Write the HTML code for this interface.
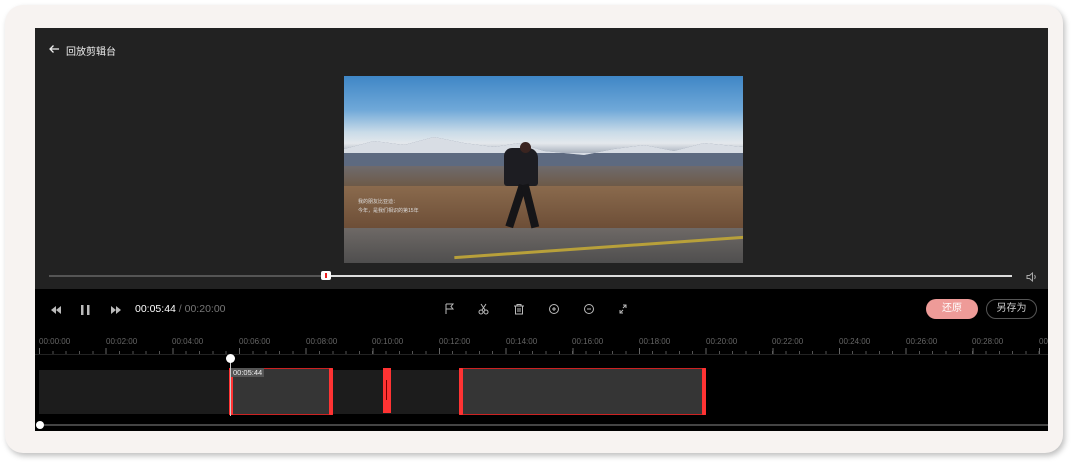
<!DOCTYPE html>
<html><head><meta charset="utf-8"><style>
*{margin:0;padding:0;box-sizing:border-box}
body{width:1080px;height:469px;background:#fff;position:relative;overflow:hidden;font-family:"Liberation Sans","Noto Sans CJK SC",sans-serif}
.card{position:absolute;left:5px;top:5px;width:1058px;height:448px;background:#f7f3f1;border-radius:18px;box-shadow:2px 3px 6px rgba(0,0,0,.25)}
.panel{position:absolute;left:35px;top:28px;width:1013px;height:403px;background:#000;overflow:hidden}
.top{position:absolute;left:0;top:0;width:1013px;height:261px;background:#222}
.abs{position:absolute}
.lbl{position:absolute;top:309px;font-size:8px;color:#666}
</style></head><body>
<div class="card"></div>
<div class="panel">
 <div class="top"></div>
 <svg class="abs" style="left:13px;top:16px" width="12" height="10" fill="none" stroke="#eee" stroke-width="1.3"><path d="M11 5H2M5.5 1.5L2 5l3.5 3.5"/></svg>
 <div class="abs" style="left:31px;top:15px;color:#eee;font-size:10px">回放剪辑台</div>
 <div class="abs" style="left:309px;top:48px;width:399px;height:187px;overflow:hidden;background:linear-gradient(180deg,#3f86c6 0%,#6fa8d8 18%,#c9dbe8 30%,#e4e8ec 36%,#5c6a80 48%,#7d7370 56%,#6b5644 64%,#8a6a4d 72%,#6d6560 82%,#575555 100%)">
  <svg class="abs" style="left:0;top:55px" width="399" height="40"><path d="M0 18L30 10 60 14 90 6 120 12 150 16 175 12 200 20 240 24 270 18 300 14 330 20 360 12 399 16V40H0Z" fill="#5d6a80"/><path d="M0 18L30 10 60 14 90 6 120 12 150 16 175 12 200 20 240 24 270 18 300 14 330 20 360 12 399 16V22H0Z" fill="#d8dde4"/></svg>
  <div class="abs" style="left:0;top:90px;width:399px;height:20px;background:linear-gradient(180deg,#6f6b6d,#6d5a48)"></div>
  <div class="abs" style="left:0;top:110px;width:399px;height:42px;background:linear-gradient(180deg,#8a6a4d,#6d4e37)"></div>
  <div class="abs" style="left:0;top:152px;width:399px;height:35px;background:linear-gradient(180deg,#6e6966,#4f4e4e)"></div>
  <div class="abs" style="left:110px;top:170px;width:290px;height:3px;background:#b8a03a;transform:rotate(-4deg)"></div>
  <div class="abs" style="left:160px;top:72px;width:34px;height:38px;background:#1d1d22;border-radius:8px 10px 3px 3px"></div>
  <div class="abs" style="left:176px;top:66px;width:11px;height:11px;background:#3a2420;border-radius:50%"></div>
  <div class="abs" style="left:168px;top:108px;width:8px;height:44px;background:#151518;transform:rotate(18deg)"></div>
  <div class="abs" style="left:182px;top:108px;width:8px;height:44px;background:#151518;transform:rotate(-14deg)"></div>
  <div class="abs" style="left:14px;top:122px;font-size:5px;color:#ddd;line-height:9px">我的朋友比亚迪：<br>今年，是我们相识的第15年</div>
 </div>
 <div class="abs" style="left:14px;top:247px;width:277px;height:2px;background:#555"></div>
 <div class="abs" style="left:291px;top:247px;width:686px;height:2px;background:#ddd"></div>
 <div class="abs" style="left:286px;top:243px;width:10px;height:9px;background:#fff;border-radius:2px"><div style="margin:2px auto;width:2px;height:5px;background:#e22"></div></div>
 <svg class="abs" style="left:991px;top:244px" width="12" height="10" fill="none" stroke="#aaa" stroke-width="1"><path d="M1 3.5h2.5L6.5 1v8L3.5 6.5H1z M8.5 3q1.5 2 0 4"/></svg>
 <!-- controls -->
 <svg class="abs" style="left:15px;top:277px" width="90" height="10" fill="#bbb">
  <path d="M6 1v8L1 5zM11 1v8L6 5z"/>
  <rect x="31" y="0" width="2.5" height="10"/><rect x="37" y="0" width="2.5" height="10"/>
  <path d="M61 1v8l5-4zM66 1v8l5-4z"/>
 </svg>
 <div class="abs" style="left:100px;top:275px;font-size:10.5px;color:#fff">00:05:44 <span style="color:#777">/ 00:20:00</span></div>
 <svg class="abs" style="left:405px;top:273px" width="200" height="16" fill="none" stroke="#bbb" stroke-width="1">
  <path d="M6 3v10M6 3h7l-2 2.5 2 2.5h-7"/>
  <circle cx="41" cy="11" r="2"/><circle cx="46" cy="11" r="2"/><path d="M42 9l4-6M45 9l-4-6"/>
  <path d="M74 5h10M77 5v-1.5h4V5M75.5 5v8h7V5M78 7v4M80 7v4"/>
  <circle cx="114" cy="8" r="4.5"/><path d="M112 8h4M114 6v4"/>
  <circle cx="149" cy="8" r="4.5"/><path d="M147 8h4"/>
  <path d="M180 12l3-3M183 4h3v3M186 4l-3 3M180 9v3h3"/>
 </svg>
 <div class="abs" style="left:891px;top:271px;width:52px;height:20px;border-radius:10px;background:#ee9b98;color:#fff;font-size:10px;text-align:center;line-height:20px">还原</div>
 <div class="abs" style="left:951px;top:271px;width:51px;height:20px;border-radius:10px;border:1px solid #555;color:#ccc;font-size:10px;text-align:center;line-height:18px">另存为</div>
 <!-- ruler -->
 <div class="lbl" style="left:4px">00:00:00</div><div class="lbl" style="left:71px">00:02:00</div><div class="lbl" style="left:137px">00:04:00</div><div class="lbl" style="left:204px">00:06:00</div><div class="lbl" style="left:271px">00:08:00</div><div class="lbl" style="left:337px">00:10:00</div><div class="lbl" style="left:404px">00:12:00</div><div class="lbl" style="left:471px">00:14:00</div><div class="lbl" style="left:537px">00:16:00</div><div class="lbl" style="left:604px">00:18:00</div><div class="lbl" style="left:671px">00:20:00</div><div class="lbl" style="left:737px">00:22:00</div><div class="lbl" style="left:804px">00:24:00</div><div class="lbl" style="left:871px">00:26:00</div><div class="lbl" style="left:937px">00:28:00</div><div class="lbl" style="left:1004px">00:30:00</div>
 <div class="abs" style="left:4px;top:323px;width:1009px;height:3px;background:repeating-linear-gradient(90deg,#555 0 1px,transparent 1px 13.33px)"></div>
 <div class="abs" style="left:4px;top:320px;width:1009px;height:6px;background:repeating-linear-gradient(90deg,#666 0 1px,transparent 1px 66.67px)"></div>
 <div class="abs" style="left:0;top:326px;width:1013px;height:1px;background:#222"></div>
 <!-- track -->
 <div class="abs" style="left:4px;top:342px;width:420px;height:44px;background:#1c1c1c"></div>
 <div class="abs" style="left:194px;top:340px;width:104px;height:47px;border:1px solid #c22;background:#353535"></div>
 <div class="abs" style="left:194px;top:340px;width:4px;height:47px;background:#f33;border-radius:1px"></div>
 <div class="abs" style="left:294px;top:340px;width:4px;height:47px;background:#f33;border-radius:1px"></div>
 <div class="abs" style="left:348px;top:340px;width:8px;height:45px;background:#f33"></div>
 <div class="abs" style="left:351px;top:352px;width:1px;height:20px;background:#700"></div>
 <div class="abs" style="left:424px;top:340px;width:247px;height:47px;border:1px solid #c22;background:#353535"></div>
 <div class="abs" style="left:424px;top:340px;width:4px;height:47px;background:#f33;border-radius:1px"></div>
 <div class="abs" style="left:667px;top:340px;width:4px;height:47px;background:#f33;border-radius:1px"></div>
 <div class="abs" style="left:196px;top:340px;font-size:7.5px;color:#eee;background:#555;padding:0 2px">00:05:44</div>
 <div class="abs" style="left:195px;top:332px;width:1px;height:56px;background:#ccc"></div>
 <div class="abs" style="left:191px;top:326px;width:9px;height:9px;border-radius:50%;background:#fff"></div>
 <div class="abs" style="left:4px;top:396px;width:1009px;height:2px;background:#444"></div>
 <div class="abs" style="left:1px;top:393px;width:8px;height:8px;border-radius:50%;background:#fff"></div>
</div>
</body></html>
